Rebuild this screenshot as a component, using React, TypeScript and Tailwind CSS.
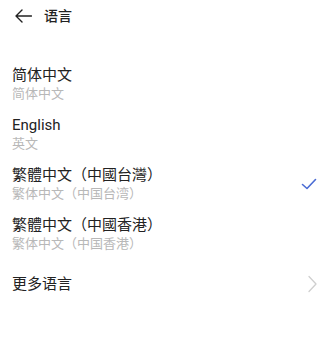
const languages = [
  { name: "简体中文", sub: "简体中文", selected: false },
  { name: "English", sub: "英文", selected: false },
  { name: "繁體中文（中國台灣）", sub: "繁体中文（中国台湾）", selected: true },
  { name: "繁體中文（中國香港）", sub: "繁体中文（中国香港）", selected: false },
];

export default function App() {
  return (
    <div
      className="h-[356px] w-[329px] bg-white"
      style={{ fontFamily: 'Roboto, "Noto Sans CJK SC", sans-serif' }}
    >
      {/* header */}
      <div className="flex h-8 items-center pl-[15px]">
        <svg width="17" height="14" viewBox="0 0 17 14" fill="none" className="text-[#222]">
          <path
            d="M16.5 7H1M7 1L1 7l6 6"
            stroke="currentColor"
            strokeWidth="1.4"
            strokeLinecap="round"
            strokeLinejoin="round"
          />
        </svg>
        <span className="ml-[12px] text-[14px] font-medium leading-5 text-[#222]">语言</span>
      </div>

      <div className="mt-[27px]">
        {languages.map((lang) => (
          <div key={lang.name} className="flex h-[50px] items-center justify-between px-3">
            <div className="flex flex-col">
              <span className="text-[15px] leading-[20px] text-[#222]">{lang.name}</span>
              <span className="text-[13px] leading-[18px] text-[#b8b8b8]">{lang.sub}</span>
            </div>
            {lang.selected && (
              <svg width="16" height="12" viewBox="0 0 16 12" fill="none">
                <path
                  d="M1.5 6.5L6 10.5L14.5 1.5"
                  stroke="#4a6cd4"
                  strokeWidth="1.6"
                  strokeLinecap="round"
                  strokeLinejoin="round"
                />
              </svg>
            )}
          </div>
        ))}

        <div className="flex h-[50px] items-center justify-between px-3">
          <span className="text-[15px] leading-[20px] text-[#222]">更多语言</span>
          <svg width="9" height="18" viewBox="0 0 9 18" fill="none">
            <path
              d="M1 1.5L8 9L1 16.5"
              stroke="#cfcfcf"
              strokeWidth="1.3"
              strokeLinecap="round"
              strokeLinejoin="round"
            />
          </svg>
        </div>
      </div>
    </div>
  );
}
